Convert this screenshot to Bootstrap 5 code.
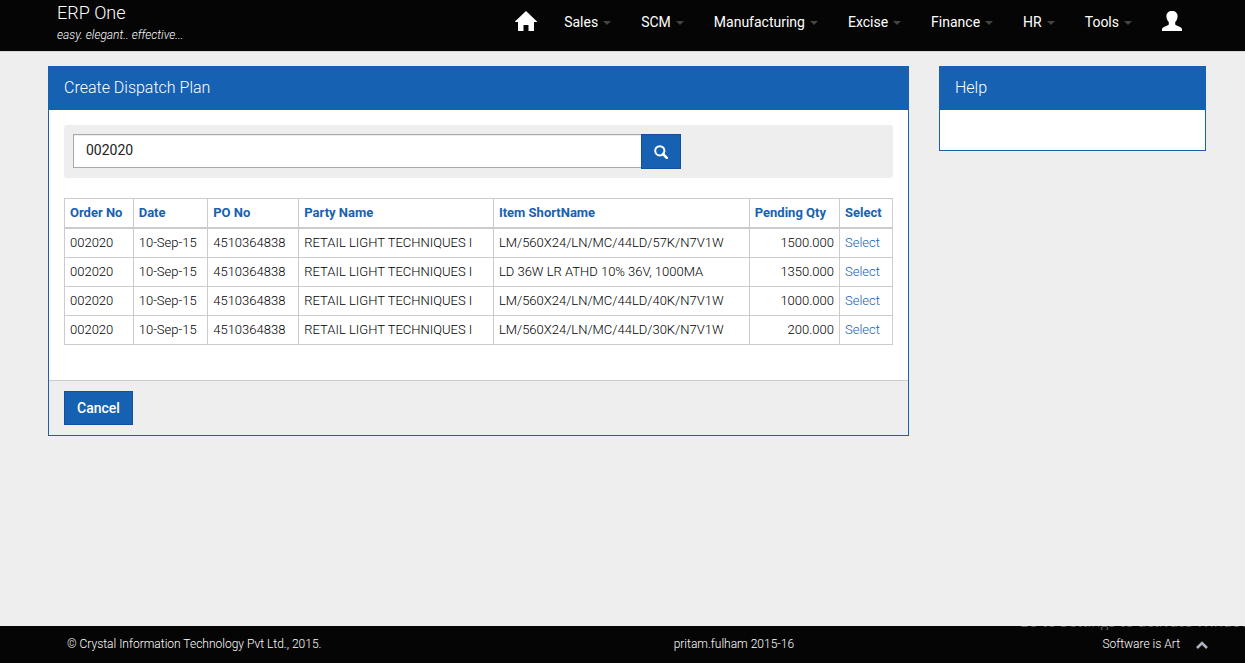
<!DOCTYPE html>
<html lang="en">
<head>
<meta charset="utf-8">
<meta name="viewport" content="width=device-width, initial-scale=1">
<title>ERP One - Create Dispatch Plan</title>
<link rel="stylesheet" href="https://cdn.jsdelivr.net/npm/bootstrap@5.3.0/dist/css/bootstrap.min.css">
<style>
:root { --brand: #1761b3; --brand-dark: #134f9c; --ink: #050505; --line: #ccc; --soft: #eee; }
body { background: var(--soft); color: #000; font: 400 14px/20px Roboto, sans-serif; }
.topbar { background: var(--ink); border-bottom: 1px solid #d5d5d5; height: 52px; padding: 1px 48px 0 57px; }
.brand-name { color: #fff; font-size: 18px; font-weight: 300; line-height: 24px; }
.brand-tag { color: #fff; font-size: 12px; font-weight: 300; font-style: italic; line-height: 20px; }
.topbar .nav-link { color: #fff; font-size: 14px; line-height: 20px; padding: 11px 15px; }
.topbar .nav-icon { padding: 10px 12px 10px 15px; }
.topbar .nav-item:last-child .nav-icon { padding-right: 15px; }
.topbar .dropdown-toggle::after { border-top: 4px solid #444; border-left: 4px solid transparent; border-right: 4px solid transparent; margin-left: 5px; vertical-align: 2px; }
.page { padding: 14px 39px 60px 48px; }
.page > .row { --bs-gutter-x: 30px; }
.panel { --bs-card-border-color: var(--brand); --bs-card-border-radius: 0; --bs-card-inner-border-radius: 0; color: #000; }
.panel .card-header { background: var(--brand); color: #fff; font-size: 16px; font-weight: 300; line-height: 22px; padding: 10px 15px; border-bottom: 1px solid var(--brand); }
.panel .card-body { padding: 15px; }
.panel .card-footer { background: var(--soft); border-top: 1px solid var(--line); padding: 10px 15px; }
.panel-blank { height: 40px; }
.finder { background: var(--soft); border-radius: 3px; padding: 9px; margin-bottom: 20px; }
.finder .input-group { width: 75%; }
.finder .form-control { align-self: flex-start; border: 1px solid #aaa; border-radius: 0; color: #222; font-size: 14px; height: 34px; line-height: 20px; padding: 5px 12px 7px; box-shadow: inset 0 1px 1px rgba(0,0,0,.08); }
.finder .btn { height: 35px; padding-top: 4px; }
.btn-brand { --bs-btn-color: #fff; --bs-btn-bg: var(--brand); --bs-btn-border-color: var(--brand-dark); --bs-btn-hover-color: #fff; --bs-btn-hover-bg: var(--brand-dark); --bs-btn-border-radius: 0; --bs-btn-font-size: 14px; --bs-btn-font-weight: 500; --bs-btn-padding-x: 12px; --bs-btn-padding-y: 6px; line-height: 20px; }
.orders { --bs-table-color: #000; --bs-table-bg: #fff; border-color: var(--line); font-size: 13px; font-weight: 300; line-height: 18px; margin-bottom: 20px; table-layout: fixed; }
.orders > :not(caption) > * > * { padding: 5px; white-space: nowrap; }
.orders thead th { color: var(--brand); font-weight: 700; border-bottom: 2px solid var(--line); }
.orders a { color: var(--brand); text-decoration: none; }
.bottombar { background: var(--ink); color: #fff; font-size: 12px; font-weight: 300; line-height: 17px; height: 37px; padding: 0 37px 0 67px; display: grid; grid-template-columns: 607fr 429fr auto; align-items: center; overflow: hidden; }
.os-notice { position: absolute; right: 0; top: -14px; width: 227px; color: #555; font: 15px/18px "Open Sans", sans-serif; white-space: nowrap; overflow: hidden; }
</style>
</head>
<body>
<header class="topbar d-flex justify-content-between">
  <a class="text-decoration-none" href="#">
    <div class="brand-name">ERP One</div>
    <div class="brand-tag">easy. elegant.. effective...</div>
  </a>
  <nav aria-label="Main">
    <ul class="nav flex-nowrap">
      <li class="nav-item"><a class="nav-link nav-icon" href="#" aria-label="Home"><svg class="d-block" width="22" height="20" viewBox="0 0 22 20" fill="#fff"><path d="M11 0 0 10.500V11h3v9h5.500v-6h5v6H19v-9h3v-.5z"/></svg></a></li>
      <li class="nav-item dropdown"><a class="nav-link dropdown-toggle" href="#">Sales</a></li>
      <li class="nav-item dropdown"><a class="nav-link dropdown-toggle" href="#">SCM</a></li>
      <li class="nav-item dropdown"><a class="nav-link dropdown-toggle" href="#">Manufacturing</a></li>
      <li class="nav-item dropdown"><a class="nav-link dropdown-toggle" href="#">Excise</a></li>
      <li class="nav-item dropdown"><a class="nav-link dropdown-toggle" href="#">Finance</a></li>
      <li class="nav-item dropdown"><a class="nav-link dropdown-toggle" href="#">HR</a></li>
      <li class="nav-item dropdown"><a class="nav-link dropdown-toggle" href="#">Tools</a></li>
      <li class="nav-item"><a class="nav-link nav-icon" href="#" aria-label="Account"><svg class="d-block" width="20" height="20" viewBox="0 0 20 20" fill="#fff"><path d="M10 0c3.500 0 5.600 2 5.600 5.300 0 1.500-.3 2.600-.9 3.700-.5 1-1.500 1.700-1.500 2.600v1.300c0 .8.6 1.200 1.600 1.600l3.200 1.500c1.400.6 2 1.400 2 2.600V20H0v-1.400C0 17.400.6 16.600 2 16l3.200-1.500c1-.4 1.600-.8 1.600-1.600v-1.300c0-.9-1-1.600-1.500-2.600C4.700 7.900 4.400 6.800 4.400 5.300 4.400 2 6.500 0 10 0z"/></svg></a></li>
    </ul>
  </nav>
</header>

<main class="page">
  <div class="row">
    <section class="col-9">
      <div class="card panel">
        <h1 class="card-header mb-0">Create Dispatch Plan</h1>
        <div class="card-body">
          <form class="finder">
            <div class="input-group">
              <input class="form-control" type="text" value="002020" aria-label="Order number">
              <button class="btn btn-brand" type="button" aria-label="Search"><svg width="14" height="14" viewBox="0 0 14 14" fill="none" stroke="#fff"><circle cx="5.800" cy="5.800" r="4.600" stroke-width="2"/><path d="m9 9 3.800 3.800" stroke-width="2.600" stroke-linecap="round"/></svg></button>
            </div>
          </form>
          <table class="table table-bordered orders">
            <colgroup>
              <col style="width:8.300%"><col style="width:9%"><col style="width:11%"><col style="width:23.500%"><col style="width:30.900%"><col style="width:10.900%"><col style="width:6.400%">
            </colgroup>
            <thead>
              <tr><th>Order No</th><th>Date</th><th>PO No</th><th>Party Name</th><th>Item ShortName</th><th>Pending Qty</th><th>Select</th></tr>
            </thead>
            <tbody>
              <tr><td>002020</td><td>10-Sep-15</td><td>4510364838</td><td>RETAIL LIGHT TECHNIQUES I</td><td>LM/560X24/LN/MC/44LD/57K/N7V1W</td><td class="text-end">1500.000</td><td><a href="#">Select</a></td></tr>
              <tr><td>002020</td><td>10-Sep-15</td><td>4510364838</td><td>RETAIL LIGHT TECHNIQUES I</td><td>LD 36W LR ATHD 10% 36V, 1000MA</td><td class="text-end">1350.000</td><td><a href="#">Select</a></td></tr>
              <tr><td>002020</td><td>10-Sep-15</td><td>4510364838</td><td>RETAIL LIGHT TECHNIQUES I</td><td>LM/560X24/LN/MC/44LD/40K/N7V1W</td><td class="text-end">1000.000</td><td><a href="#">Select</a></td></tr>
              <tr><td>002020</td><td>10-Sep-15</td><td>4510364838</td><td>RETAIL LIGHT TECHNIQUES I</td><td>LM/560X24/LN/MC/44LD/30K/N7V1W</td><td class="text-end">200.000</td><td><a href="#">Select</a></td></tr>
            </tbody>
          </table>
        </div>
        <div class="card-footer"><button class="btn btn-brand" type="button">Cancel</button></div>
      </div>
    </section>
    <aside class="col-3">
      <div class="card panel">
        <h2 class="card-header mb-0">Help</h2>
        <div class="panel-blank"></div>
      </div>
    </aside>
  </div>
</main>

<footer class="bottombar fixed-bottom">
  <span>© Crystal Information Technology Pvt Ltd., 2015.</span>
  <span>pritam.fulham 2015-16</span>
  <span class="d-flex align-items-center">Software is Art
    <a class="d-block ms-3" href="#" aria-label="Back to top"><svg class="d-block" width="12" height="8" viewBox="0 0 12 8" fill="none" stroke="#aab4be" stroke-width="2.600"><path d="m1 7 5-5 5 5"/></svg></a>
  </span>
  <div class="os-notice">Go to Settings to activate Windows.</div>
</footer>
<script src="https://cdn.jsdelivr.net/npm/bootstrap@5.3.0/dist/js/bootstrap.bundle.min.js"></script>
</body>
</html>
